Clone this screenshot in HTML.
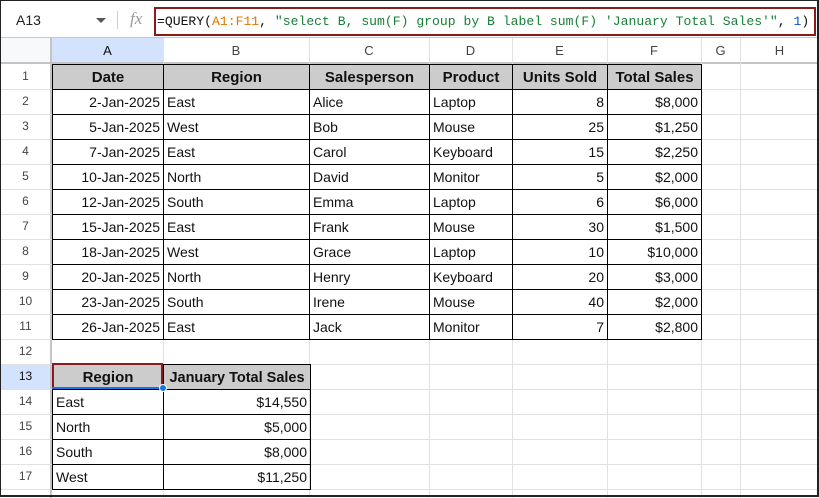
<!DOCTYPE html>
<html><head><meta charset="utf-8"><style>
*{margin:0;padding:0;box-sizing:border-box}
body{width:819px;height:497px;overflow:hidden;background:#fff;font-family:"Liberation Sans",sans-serif;position:relative}
.frame{position:absolute;left:0;top:0;width:819px;height:497px;border:1px solid #222;border-right-width:2px;border-bottom-width:2px;pointer-events:none;z-index:10}
.a{position:absolute}
.v{position:absolute;top:38px;width:1px;height:460px;background:#e1e1e1}
.h{position:absolute;left:0;height:1px;width:819px;background:#e1e1e1}
.ch{position:absolute;top:38px;height:25px;font-size:13px;color:#444;text-align:center;line-height:25px}
.rh{position:absolute;left:0;width:51px;font-size:12px;color:#444;text-align:center;height:25px;line-height:25px}
table{position:absolute;border-collapse:collapse;table-layout:fixed;font-size:14px;color:#111}
td{border:1px solid #000;height:25px;padding:1px 3px 0;white-space:nowrap;overflow:hidden;line-height:23px}
th{border:1px solid #000;height:25px;background:#cccccc;font-weight:bold;font-size:15px;text-align:center;white-space:nowrap;overflow:hidden;padding-top:1px}
.r{text-align:right}
</style></head><body>
<div class="frame"></div>
<div class="a" style="left:0;top:0;width:819px;height:38px;background:#fff;border-bottom:1px solid #c7c7c7"></div>
<div class="a" style="left:16px;top:12px;font-size:14px;color:#222">A13</div>
<div class="a" style="left:96px;top:18px;width:0;height:0;border-left:5px solid transparent;border-right:5px solid transparent;border-top:5px solid #555"></div>
<div class="a" style="left:117px;top:11px;width:1px;height:18px;background:#ccc"></div>
<div class="a" style="left:130px;top:9px;font-family:'Liberation Serif',serif;font-style:italic;font-size:17px;color:#999">fx</div>
<div class="a" style="left:154px;top:7px;width:662px;height:29px;border:2px solid #8b1a1a"></div>
<div class="a" style="left:157px;top:14px;font-family:'Liberation Mono',monospace;font-size:13.1px;color:#111;white-space:pre">=QUERY(<span style="color:#e37400">A1:F11</span>, <span style="color:#188038">"select B, sum(F) group by B label sum(F) 'January Total Sales'"</span>, <span style="color:#1155cc">1</span>)</div>
<div class="a" style="left:0;top:38px;width:52px;height:25px;background:#f8f9fa"></div>
<div class="a" style="left:52px;top:38px;width:111px;height:25px;background:#d3e3fd"></div>
<div class="a" style="left:0;top:364px;width:51px;height:25px;background:#d3e3fd"></div>
<div class="a" style="left:0;top:62px;width:819px;height:2px;background:#c4c4c4"></div>
<div class="a" style="left:50px;top:38px;width:2px;height:460px;background:#c4c4c4"></div>
<div class="v" style="left:163px"></div><div class="v" style="left:309px"></div><div class="v" style="left:429px"></div><div class="v" style="left:512px"></div><div class="v" style="left:607px"></div><div class="v" style="left:701px"></div><div class="v" style="left:740px"></div>
<div class="h" style="top:89px"></div><div class="h" style="top:114px"></div><div class="h" style="top:139px"></div><div class="h" style="top:164px"></div><div class="h" style="top:189px"></div><div class="h" style="top:214px"></div><div class="h" style="top:239px"></div><div class="h" style="top:264px"></div><div class="h" style="top:289px"></div><div class="h" style="top:314px"></div><div class="h" style="top:339px"></div><div class="h" style="top:364px"></div><div class="h" style="top:389px"></div><div class="h" style="top:414px"></div><div class="h" style="top:439px"></div><div class="h" style="top:464px"></div><div class="h" style="top:489px"></div>
<div class="ch" style="left:52px;width:111px;color:#111">A</div>
<div class="ch" style="left:163px;width:146px">B</div>
<div class="ch" style="left:309px;width:120px">C</div>
<div class="ch" style="left:429px;width:83px">D</div>
<div class="ch" style="left:512px;width:95px">E</div>
<div class="ch" style="left:607px;width:94px">F</div>
<div class="ch" style="left:701px;width:39px">G</div>
<div class="ch" style="left:740px;width:79px">H</div>
<div class="rh" style="top:64px">1</div><div class="rh" style="top:89px">2</div><div class="rh" style="top:114px">3</div><div class="rh" style="top:139px">4</div><div class="rh" style="top:164px">5</div><div class="rh" style="top:189px">6</div><div class="rh" style="top:214px">7</div><div class="rh" style="top:239px">8</div><div class="rh" style="top:264px">9</div><div class="rh" style="top:289px">10</div><div class="rh" style="top:314px">11</div><div class="rh" style="top:339px">12</div><div class="rh" style="top:364px;color:#111">13</div><div class="rh" style="top:389px">14</div><div class="rh" style="top:414px">15</div><div class="rh" style="top:439px">16</div><div class="rh" style="top:464px">17</div>
<table style="left:52px;top:64px;width:649px">
<colgroup><col style="width:111px"><col style="width:146px"><col style="width:120px"><col style="width:83px"><col style="width:95px"><col style="width:94px"></colgroup>
<tr><th>Date</th><th>Region</th><th>Salesperson</th><th>Product</th><th>Units Sold</th><th>Total Sales</th></tr>
<tr><td class="r">2-Jan-2025</td><td>East</td><td>Alice</td><td>Laptop</td><td class="r">8</td><td class="r">$8,000</td></tr>
<tr><td class="r">5-Jan-2025</td><td>West</td><td>Bob</td><td>Mouse</td><td class="r">25</td><td class="r">$1,250</td></tr>
<tr><td class="r">7-Jan-2025</td><td>East</td><td>Carol</td><td>Keyboard</td><td class="r">15</td><td class="r">$2,250</td></tr>
<tr><td class="r">10-Jan-2025</td><td>North</td><td>David</td><td>Monitor</td><td class="r">5</td><td class="r">$2,000</td></tr>
<tr><td class="r">12-Jan-2025</td><td>South</td><td>Emma</td><td>Laptop</td><td class="r">6</td><td class="r">$6,000</td></tr>
<tr><td class="r">15-Jan-2025</td><td>East</td><td>Frank</td><td>Mouse</td><td class="r">30</td><td class="r">$1,500</td></tr>
<tr><td class="r">18-Jan-2025</td><td>West</td><td>Grace</td><td>Laptop</td><td class="r">10</td><td class="r">$10,000</td></tr>
<tr><td class="r">20-Jan-2025</td><td>North</td><td>Henry</td><td>Keyboard</td><td class="r">20</td><td class="r">$3,000</td></tr>
<tr><td class="r">23-Jan-2025</td><td>South</td><td>Irene</td><td>Mouse</td><td class="r">40</td><td class="r">$2,000</td></tr>
<tr><td class="r">26-Jan-2025</td><td>East</td><td>Jack</td><td>Monitor</td><td class="r">7</td><td class="r">$2,800</td></tr>
</table>
<table style="left:52px;top:364px;width:258px">
<colgroup><col style="width:111px"><col style="width:147px"></colgroup>
<tr><th>Region</th><th style="font-size:14.5px">January Total Sales</th></tr>
<tr><td>East</td><td class="r">$14,550</td></tr>
<tr><td>North</td><td class="r">$5,000</td></tr>
<tr><td>South</td><td class="r">$8,000</td></tr>
<tr><td>West</td><td class="r">$11,250</td></tr>
</table>
<div class="a" style="left:52px;top:363px;width:111px;height:26px;border:2px solid #8b1a1a"></div>
<div class="a" style="left:52px;top:387px;width:111px;height:2px;background:#1a73e8"></div>
<div class="a" style="left:159px;top:384px;width:8px;height:8px;border-radius:50%;background:#1a73e8;border:1px solid #fff"></div>
</body></html>
